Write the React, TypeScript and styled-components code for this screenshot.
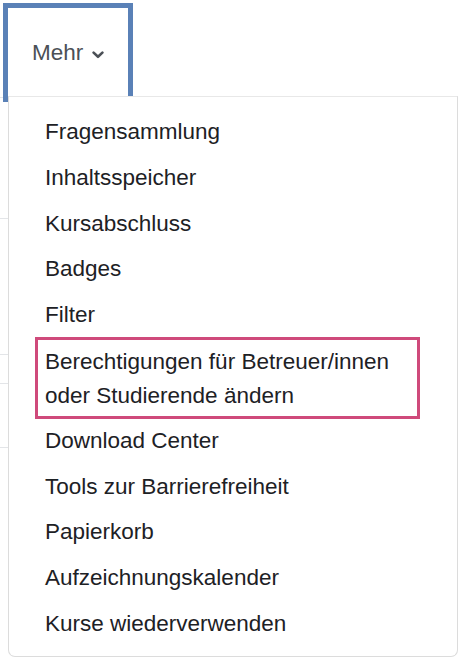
import React from "react";
import styled, { createGlobalStyle } from "styled-components";

const Global = createGlobalStyle`
  html, body { margin: 0; padding: 0; background: #ffffff; }
  body { font-family: "Liberation Sans", Arial, sans-serif; }
`;

const Page = styled.div`
  position: relative;
  width: 470px;
  height: 664px;
  overflow: hidden;
  background: #ffffff;
`;

const Nav = styled.div`
  display: flex;
  align-items: flex-start;
  height: 98px;
`;

const NavEdge = styled.div`
  width: 3px;
  height: 97px;
  border-bottom: 1px solid #e3e5e8;
`;

const NavLink = styled.button`
  display: flex;
  align-items: flex-start;
  gap: 9px;
  margin: 3px 0 0 0;
  height: 99px;
  width: 130px;
  box-sizing: border-box;
  padding: 32px 0 0 24px;
  border: 5px solid #5a81b7;
  background: #fff;
  font-family: "Liberation Sans", Arial, sans-serif;
  font-size: 22.5px;
  color: #4b5056;
  cursor: pointer;
  position: relative;
  z-index: 1;
`;

const Chevron = styled.svg`
  width: 12px;
  height: 8px;
  margin-top: 11px;
`;

const Backdrop = styled.div`
  display: flex;
  flex-direction: column;
  width: 8px;
`;

const BackRow = styled.div<{ $h: number }>`
  height: ${(p) => p.$h}px;
  border-bottom: 1px solid #e3e5e8;
`;

const Menu = styled.ul`
  position: absolute;
  top: 96px;
  left: 8px;
  width: 450px;
  height: 561px;
  box-sizing: border-box;
  margin: 0;
  padding: 12px 0;
  list-style: none;
  background: #fff;
  border: 1px solid #dcdcdc;
  border-top-color: #e8e8e8;
  border-radius: 0 0 7px 7px;
  z-index: 2;
`;

const Item = styled.li<{ $focus?: boolean }>`
  font-family: "Liberation Sans", Arial, sans-serif;
  font-size: 22.5px;
  line-height: 33.75px;
  color: #1d2125;
  padding: 6px 0 6px 36px;
  ${(p) =>
    p.$focus
      ? `
    margin: -1px 0 -1px 26px;
    padding: 5px 0 6px 7px;
    border: 3px solid #cf4a7b;
    box-sizing: border-box;
    height: 82px;
    width: 385px;
  `
      : ""}
`;

const items = [
  "Fragensammlung",
  "Inhaltsspeicher",
  "Kursabschluss",
  "Badges",
  "Filter",
  "__focus__",
  "Download Center",
  "Tools zur Barrierefreiheit",
  "Papierkorb",
  "Aufzeichnungskalender",
  "Kurse wiederverwenden",
];

export default function App() {
  return (
    <Page>
      <Global />
      <Nav>
        <NavEdge />
        <NavLink>
          Mehr
          <Chevron viewBox="0 0 12 8">
            <polyline
              points="1.6,1.6 6,5.8 10.4,1.6"
              fill="none"
              stroke="#4b5056"
              strokeWidth="2.6"
              strokeLinecap="round"
              strokeLinejoin="round"
            />
          </Chevron>
        </NavLink>
      </Nav>
      <Backdrop>
        <BackRow $h={120} />
        <BackRow $h={135} />
        <BackRow $h={28} />
        <BackRow $h={63} />
      </Backdrop>
      <Menu>
        {items.map((t) =>
          t === "__focus__" ? (
            <Item key={t} $focus>
              Berechtigungen für Betreuer/innen
              <br />
              oder Studierende ändern
            </Item>
          ) : (
            <Item key={t}>{t}</Item>
          )
        )}
      </Menu>
    </Page>
  );
}
